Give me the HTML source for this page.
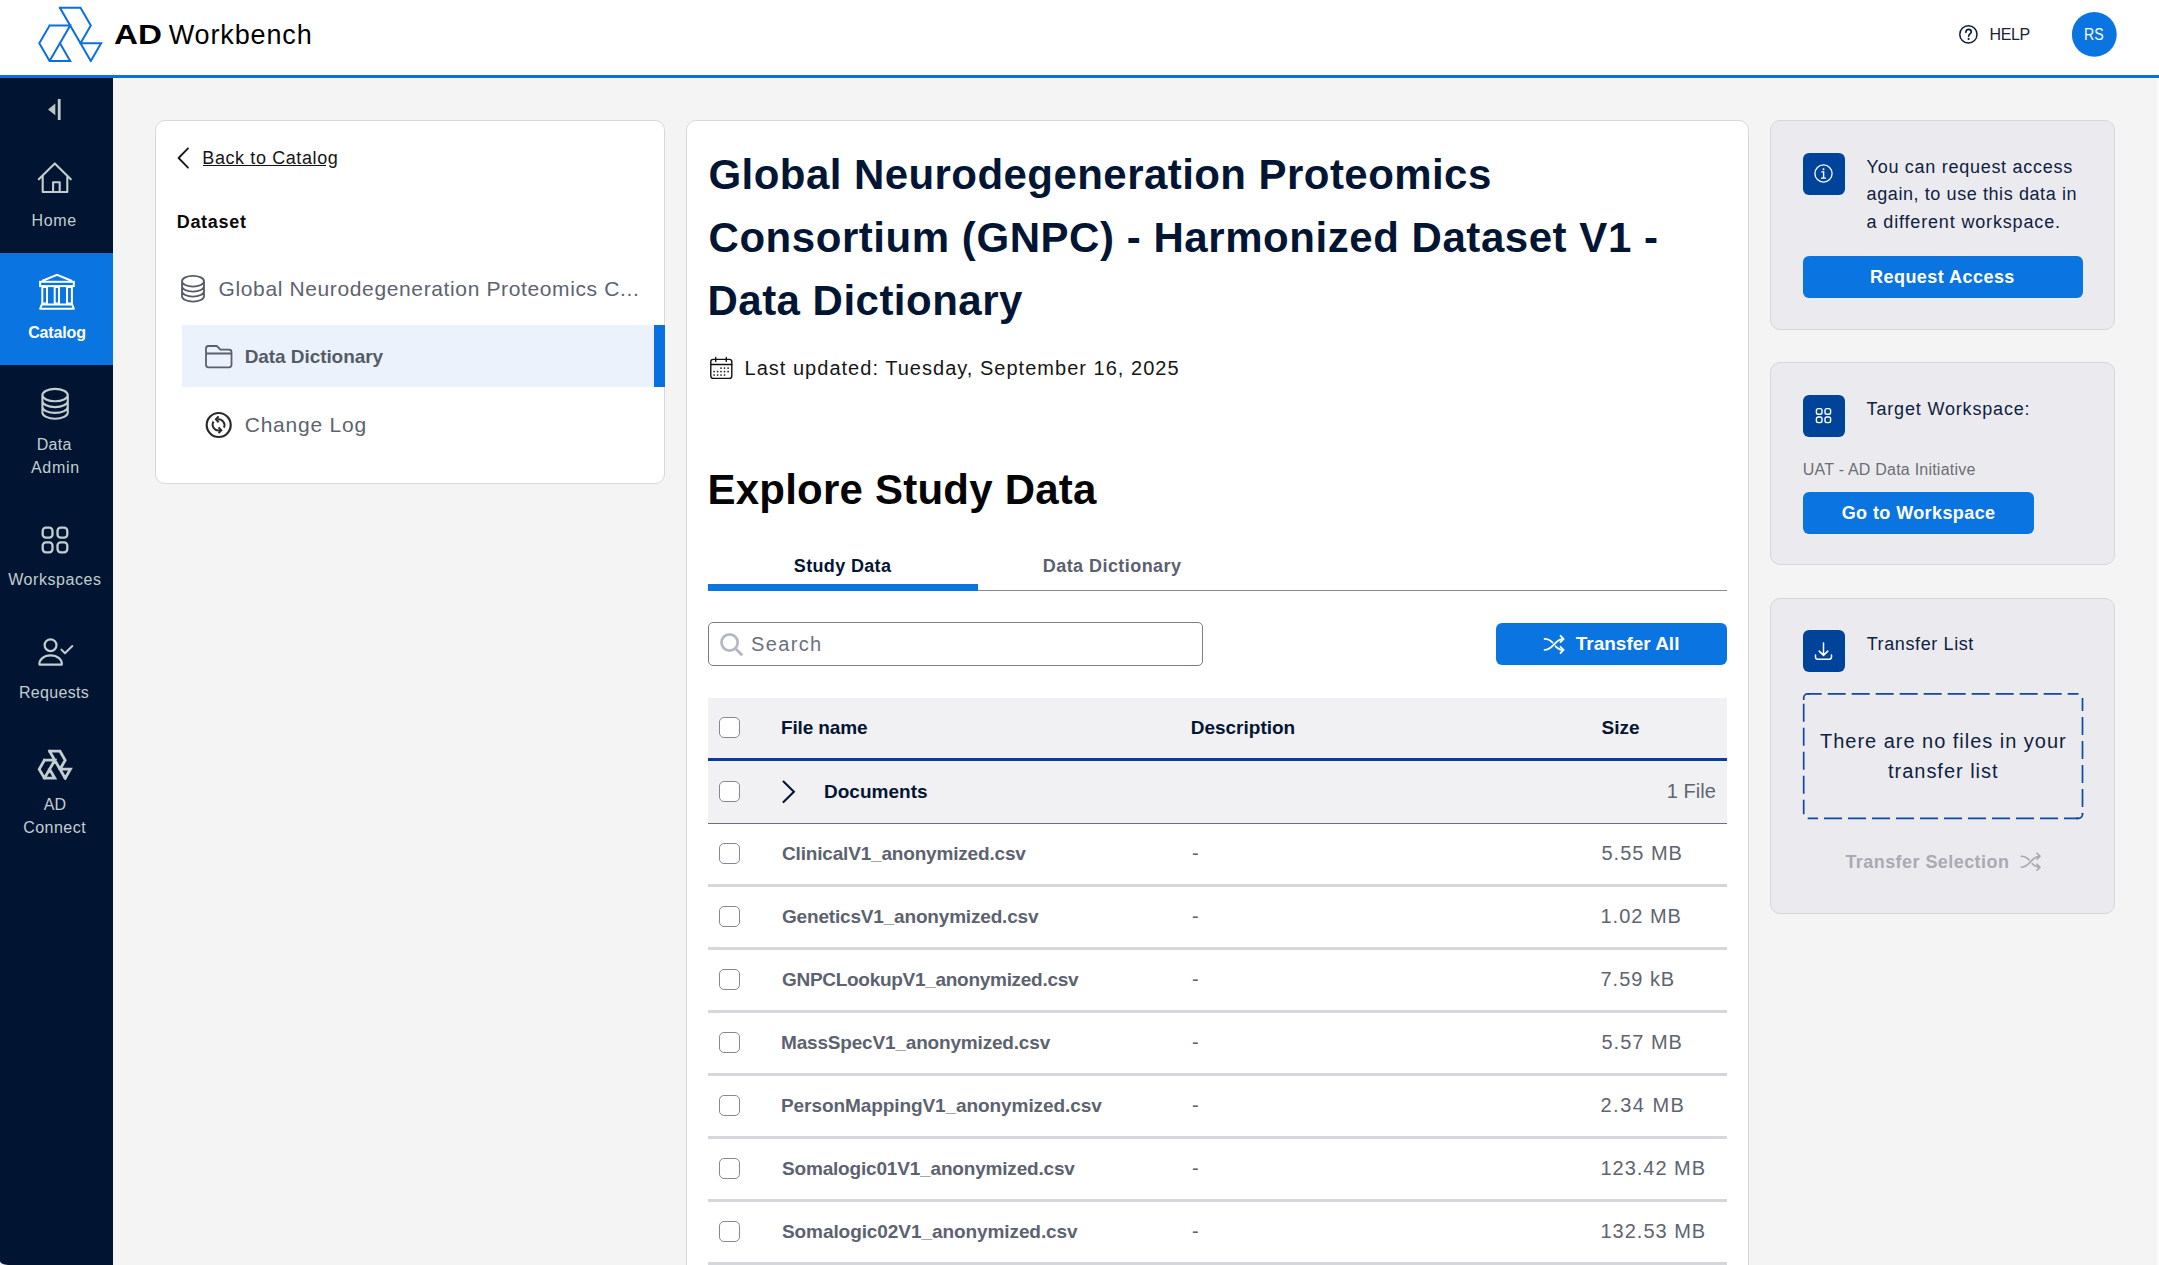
<!DOCTYPE html>
<html><head><meta charset="utf-8">
<style>
*{box-sizing:border-box;margin:0;padding:0}
html,body{width:2159px;height:1265px;overflow:hidden;background:#f4f4f4;font-family:"Liberation Sans",sans-serif}
.a{position:absolute}
.t{position:absolute;white-space:nowrap;line-height:1}
svg{position:absolute;left:0;top:0}
</style></head><body>
<div class="a" style="left:0;top:0;width:2159px;height:75px;background:#fff"></div>
<div class="a" style="left:0;top:75px;width:2159px;height:3px;background:#0a6fe0"></div>
<div class="a" style="left:0;top:78px;width:113px;height:1187px;background:#011533"></div>
<div class="a" style="left:2157px;top:78px;width:2px;height:1187px;background:#fbfbfb"></div>
<div class="a" style="left:155px;top:120px;width:510px;height:364px;background:#fff;border:1px solid #d8d8d8;border-radius:10px"></div>
<div class="a" style="left:182px;top:325px;width:473px;height:62px;background:#ebf2fc"></div>
<div class="a" style="left:203.3px;top:165px;width:122.5px;height:1px;background:#151515"></div>
<div class="a" style="left:654px;top:325px;width:11px;height:62px;background:#0a6fe0"></div>
<div class="a" style="left:686px;top:120px;width:1063px;height:1200px;background:#fff;border:1px solid #d8d8d8;border-radius:10px"></div>
<div class="a" style="left:1770px;top:120px;width:345px;height:210px;background:#ebebef;border:1px solid #d6d6db;border-radius:10px"></div>
<div class="a" style="left:1770px;top:362px;width:345px;height:203px;background:#ebebef;border:1px solid #d6d6db;border-radius:10px"></div>
<div class="a" style="left:1770px;top:598px;width:345px;height:316px;background:#ebebef;border:1px solid #d6d6db;border-radius:10px"></div>
<div class="a" style="left:1803px;top:153px;width:42px;height:42px;background:#00439a;border-radius:6px"></div>
<div class="a" style="left:1803px;top:395px;width:42px;height:42px;background:#00439a;border-radius:6px"></div>
<div class="a" style="left:1803px;top:630px;width:42px;height:42px;background:#00439a;border-radius:6px"></div>
<div class="a" style="left:1803px;top:256px;width:280px;height:42px;background:#0a74e0;border-radius:6px"></div>
<div class="a" style="left:1803px;top:492px;width:231px;height:42px;background:#0a74e0;border-radius:6px"></div>
<div class="a" style="left:708px;top:590px;width:1019px;height:1px;background:#8a8a96"></div>
<div class="a" style="left:708px;top:584px;width:270px;height:7px;background:#0a74e0"></div>
<div class="a" style="left:708px;top:622px;width:495px;height:44px;border:1.5px solid #7a7d88;border-radius:5px;background:#fff"></div>
<div class="a" style="left:1496px;top:623px;width:231px;height:42px;background:#0a74e0;border-radius:6px"></div>
<div class="a" style="left:708px;top:698px;width:1019px;height:60px;background:#f1f1f4"></div>
<div class="a" style="left:708px;top:758px;width:1019px;height:3px;background:#0b3d98"></div>
<div class="a" style="left:708px;top:761px;width:1019px;height:62px;background:#f1f1f4"></div>
<div class="a" style="left:708px;top:823px;width:1019px;height:1px;background:#6b6f80"></div>
<div class="a" style="left:708px;top:884px;width:1019px;height:3px;background:#d6d6dd"></div>
<div class="a" style="left:708px;top:947px;width:1019px;height:3px;background:#d6d6dd"></div>
<div class="a" style="left:708px;top:1010px;width:1019px;height:3px;background:#d6d6dd"></div>
<div class="a" style="left:708px;top:1073px;width:1019px;height:3px;background:#d6d6dd"></div>
<div class="a" style="left:708px;top:1136px;width:1019px;height:3px;background:#d6d6dd"></div>
<div class="a" style="left:708px;top:1199px;width:1019px;height:3px;background:#d6d6dd"></div>
<div class="a" style="left:708px;top:1262px;width:1019px;height:3px;background:#d6d6dd"></div>
<div class="a" style="left:719px;top:717px;width:21px;height:21px;background:#fff;border:1px solid #858896;border-radius:5px"></div>
<div class="a" style="left:719px;top:781px;width:21px;height:21px;background:#fff;border:1px solid #858896;border-radius:5px"></div>
<div class="a" style="left:719px;top:843px;width:21px;height:21px;background:#fff;border:1px solid #858896;border-radius:5px"></div>
<div class="a" style="left:719px;top:906px;width:21px;height:21px;background:#fff;border:1px solid #858896;border-radius:5px"></div>
<div class="a" style="left:719px;top:969px;width:21px;height:21px;background:#fff;border:1px solid #858896;border-radius:5px"></div>
<div class="a" style="left:719px;top:1032px;width:21px;height:21px;background:#fff;border:1px solid #858896;border-radius:5px"></div>
<div class="a" style="left:719px;top:1095px;width:21px;height:21px;background:#fff;border:1px solid #858896;border-radius:5px"></div>
<div class="a" style="left:719px;top:1158px;width:21px;height:21px;background:#fff;border:1px solid #858896;border-radius:5px"></div>
<div class="a" style="left:719px;top:1221px;width:21px;height:21px;background:#fff;border:1px solid #858896;border-radius:5px"></div>
<svg width="2159" height="1265" viewBox="0 0 2159 1265">
<path d="M59.90 7.80 L90.80 60.90 M59.90 7.80 L80.50 7.80 L90.80 25.50 L80.50 43.20 M80.50 43.20 L101.10 43.20 L90.80 60.90 M49.60 25.50 L70.20 25.50 L49.60 60.90 M49.60 25.50 L39.30 43.20 L49.60 60.90 L70.20 60.90 L59.90 43.20" fill="none" stroke="#0a6fe0" stroke-width="2" stroke-linejoin="miter" stroke-linecap="square"/>
<circle cx="1968.4" cy="34.4" r="8.6" fill="none" stroke="#0b1c3a" stroke-width="1.5"/>
<path d="M1965.8 32.3 C1966 30.4 1967.1 29.4 1968.6 29.4 C1970.3 29.4 1971.3 30.5 1971.3 31.9 C1971.3 33.7 1968.6 34.2 1968.6 36.2" fill="none" stroke="#0b1c3a" stroke-width="1.6" stroke-linecap="round"/>
<circle cx="1968.6" cy="38.9" r="1.05" fill="#0b1c3a"/>
<circle cx="2094.3" cy="34.4" r="22.4" fill="#0a74e0"/>
<path d="M55.3 103.6 L48 109.5 L55.3 115.3 Z" fill="#b8c6c6"/><rect x="57.8" y="99" width="2.8" height="21" fill="#c0cccc"/>
<rect x="0" y="253" width="113" height="112" fill="#0a74e0"/>
<path d="M38.8 179.2 L54.8 163.4 L70.8 179.2 M42.7 176 V192 H67.3 V176 M53.1 192 V182.3 H59.7 V192" fill="none" stroke="#c3cecf" stroke-width="2.1" stroke-linecap="round" stroke-linejoin="round"/>
<path d="M42 281 L57 274.8 L72 281" fill="none" stroke="#fff" stroke-width="2"/><rect x="40.1" y="281.8" width="33.7" height="4.3" fill="none" stroke="#fff" stroke-width="2"/><rect x="42.3" y="287" width="4.7" height="16.5" fill="none" stroke="#fff" stroke-width="2"/><rect x="54.7" y="287" width="4.3" height="16.5" fill="none" stroke="#fff" stroke-width="2"/><rect x="67" y="287" width="4.9" height="16.5" fill="none" stroke="#fff" stroke-width="2"/><path d="M41.8 304.5 H72.2 L73.8 308.8 H40.1 Z" fill="none" stroke="#fff" stroke-width="2" stroke-linejoin="round"/>
<path d="M42.400000000000006 395.1 A12.7 6.2 0 0 1 67.8 395.1 A12.7 6.2 0 0 1 42.400000000000006 395.1 M42.400000000000006 400.90000000000003 A12.7 6.2 0 0 0 67.8 400.90000000000003 M42.400000000000006 406.70000000000005 A12.7 6.2 0 0 0 67.8 406.70000000000005 M42.400000000000006 412.5 A12.7 6.2 0 0 0 67.8 412.5 M42.400000000000006 395.1 V412.5 M67.8 395.1 V412.5" fill="none" stroke="#c3cecf" stroke-width="2.1"/>
<rect x="42.7" y="527.7" width="9.8" height="10" rx="3.2" fill="none" stroke="#c3cecf" stroke-width="2.3"/>
<rect x="57.5" y="527.7" width="9.8" height="10" rx="3.2" fill="none" stroke="#c3cecf" stroke-width="2.3"/>
<rect x="42.7" y="542.3" width="9.8" height="10" rx="3.2" fill="none" stroke="#c3cecf" stroke-width="2.3"/>
<rect x="57.5" y="542.3" width="9.8" height="10" rx="3.2" fill="none" stroke="#c3cecf" stroke-width="2.3"/>
<circle cx="50.55" cy="645.2" r="5.9" fill="none" stroke="#c3cecf" stroke-width="2.2"/><path d="M39.5 664.6 C38.8 659.5 44 655.3 50.6 655.3 C57.2 655.3 62.6 659.5 61.7 664.6 Z" fill="none" stroke="#c3cecf" stroke-width="2.2" stroke-linejoin="round"/><path d="M61.4 649.6 L65 653.2 L72.3 646" fill="none" stroke="#c3cecf" stroke-width="2" stroke-linecap="round" stroke-linejoin="round"/>
<path d="M49.60 751.20 L65.20 778.20 M49.60 751.20 L60.00 751.20 L65.20 760.20 L60.00 769.20 M60.00 769.20 L70.40 769.20 L65.20 778.20 M44.40 760.20 L54.80 760.20 L44.40 778.20 M44.40 760.20 L39.20 769.20 L44.40 778.20 L54.80 778.20 L49.60 769.20" fill="none" stroke="#c3cecf" stroke-width="2.8" stroke-linejoin="miter" stroke-linecap="square"/>
<path d="M188 148.3 L178.6 158 L188 167.7" fill="none" stroke="#151515" stroke-width="1.8" stroke-linecap="round" stroke-linejoin="round"/>
<path d="M182 281.2 A11 5.4 0 0 1 204 281.2 A11 5.4 0 0 1 182 281.2 M182 286.2 A11 5.4 0 0 0 204 286.2 M182 291.2 A11 5.4 0 0 0 204 291.2 M182 296.2 A11 5.4 0 0 0 204 296.2 M182 281.2 V296.2 M204 281.2 V296.2" fill="none" stroke="#545a66" stroke-width="1.8"/>
<path d="M206 364.8 V348.5 A2.5 2.5 0 0 1 208.5 346 H216.8 L220.4 349.7 H229 A2.5 2.5 0 0 1 231.5 352.2 V364.8 A2.5 2.5 0 0 1 229 367.3 H208.5 A2.5 2.5 0 0 1 206 364.8 Z M206 353.5 H231.5" fill="none" stroke="#5a606c" stroke-width="1.8" stroke-linejoin="round"/>
<circle cx="218.7" cy="425" r="12" fill="none" stroke="#2a2a2a" stroke-width="2.2"/><path d="M217.5 419.4 A5.8 5.8 0 0 1 223.9 427.6 M220 430.2 A5.8 5.8 0 0 1 213.5 421.6" fill="none" stroke="#2a2a2a" stroke-width="2"/><path d="M218.6 416.3 L215.9 419.3 L218.6 422.2 M218.6 427.4 L221.3 430.2 L218.6 433.1" fill="none" stroke="#2a2a2a" stroke-width="2" stroke-linecap="butt" stroke-linejoin="miter"/>
<rect x="710.8" y="359.4" width="21" height="19" rx="2.4" fill="none" stroke="#111" stroke-width="1.4"/><path d="M710.8 364.5 H731.8 M715.7 357.4 V361.4 M726.3 357.4 V361.4" fill="none" stroke="#111" stroke-width="1.4" stroke-linecap="round"/>
<circle cx="721" cy="368.1" r="0.85" fill="#111"/>
<circle cx="724.5" cy="368.1" r="0.85" fill="#111"/>
<circle cx="728.1" cy="368.1" r="0.85" fill="#111"/>
<circle cx="714.1" cy="371.6" r="0.85" fill="#111"/>
<circle cx="717.6" cy="371.6" r="0.85" fill="#111"/>
<circle cx="721" cy="371.6" r="0.85" fill="#111"/>
<circle cx="724.5" cy="371.6" r="0.85" fill="#111"/>
<circle cx="728.1" cy="371.6" r="0.85" fill="#111"/>
<circle cx="714.1" cy="375" r="0.85" fill="#111"/>
<circle cx="717.6" cy="375" r="0.85" fill="#111"/>
<circle cx="721" cy="375" r="0.85" fill="#111"/>
<circle cx="724.5" cy="375" r="0.85" fill="#111"/>
<circle cx="729.6" cy="642.5" r="8.1" fill="none" stroke="#b5b8c4" stroke-width="2.7"/><path d="M736 649 L742.2 655.3" stroke="#b5b8c4" stroke-width="2.8"/>
<path d="M1544.6 649.9 C1549.35 649.9 1551.4399999999998 647.15 1554.1 644.4 C1556.76 641.65 1558.85 638.9 1563.6 638.9 M1544.6 638.9 C1548.3999999999999 638.9 1550.6799999999998 640.55 1552.58 642.53 M1555.62 646.27 C1557.52 648.25 1559.8 649.9 1563.6 649.9 M1560.5 635.8 L1563.6 638.9 L1560.5 642.0 M1560.5 646.8 L1563.6 649.9 L1560.5 653.0" fill="none" stroke="#fff" stroke-width="1.8" stroke-linecap="round" stroke-linejoin="round"/>
<path d="M783.5 781.5 L793.9 791.8 L783.5 802.1" fill="none" stroke="#021533" stroke-width="2.1" stroke-linecap="round" stroke-linejoin="miter"/>
<circle cx="1823.5" cy="173.5" r="8.6" fill="none" stroke="#fff" stroke-width="1.3"/><circle cx="1823.5" cy="169.3" r="1" fill="#fff"/><path d="M1821.3 171.9 H1823.6 V178 M1821 178.1 H1826" fill="none" stroke="#fff" stroke-width="1.4"/>
<rect x="1816.4" y="408.6" width="5.6" height="5.6" rx="1.8" fill="none" stroke="#fff" stroke-width="1.4"/>
<rect x="1825" y="408.6" width="5.6" height="5.6" rx="1.8" fill="none" stroke="#fff" stroke-width="1.4"/>
<rect x="1816.4" y="417" width="5.6" height="5.6" rx="1.8" fill="none" stroke="#fff" stroke-width="1.4"/>
<rect x="1825" y="417" width="5.6" height="5.6" rx="1.8" fill="none" stroke="#fff" stroke-width="1.4"/>
<path d="M1823.5 643.1 V655.2 M1819.2 651.1 L1823.5 655.4 L1827.8 651.1 M1815.5 655 V657 A2.3 2.3 0 0 0 1817.8 659.3 H1829.2 A2.3 2.3 0 0 0 1831.5 657 V655" fill="none" stroke="#fff" stroke-width="1.5" stroke-linecap="round" stroke-linejoin="round"/>
<path d="M2021.2 867.2 C2025.9 867.2 2027.968 864.45 2030.6000000000001 861.7 C2033.232 858.95 2035.3 856.2 2040.0 856.2 M2021.2 856.2 C2024.96 856.2 2027.2160000000001 857.85 2029.096 859.83 M2032.104 863.57 C2033.9840000000002 865.5500000000001 2036.24 867.2 2040.0 867.2 M2037.0 853.2 L2040.0 856.2 L2037.0 859.2 M2037.0 864.2 L2040.0 867.2 L2037.0 870.2" fill="none" stroke="#a5a7b0" stroke-width="1.6" stroke-linecap="round" stroke-linejoin="round"/>
<path d="M1807.7 693.9 H2078.5" stroke="#0d4aa0" stroke-width="1.7" stroke-dasharray="18 6" stroke-dashoffset="4.0" fill="none"/>
<path d="M2082.5 697.9 V814.3" stroke="#0d4aa0" stroke-width="1.7" stroke-dasharray="18 6" stroke-dashoffset="4.9" fill="none"/>
<path d="M1807.7 818.3 H2078.5" stroke="#0d4aa0" stroke-width="1.7" stroke-dasharray="18 6" stroke-dashoffset="7.7" fill="none"/>
<path d="M1803.7 697.9 V814.3" stroke="#0d4aa0" stroke-width="1.7" stroke-dasharray="18 6" stroke-dashoffset="18.1" fill="none"/>
<path d="M1803.7 700 V697.9 A4 4 0 0 1 1807.7 693.9 H1810" stroke="#0d4aa0" stroke-width="1.7" fill="none"/>
<path d="M2076 818.3 H2078.5 A4 4 0 0 0 2082.5 814.3 V813" stroke="#0d4aa0" stroke-width="1.7" fill="none"/>
<path d="M0 1261 C0.6 1263.6 3.5 1264.6 8 1265 H0 Z" fill="#f2f2f2"/>
</svg>
<div class="t" style="left:113.5px;top:22.0px;font-size:27px;font-weight:700;color:#000;transform:scaleX(1.2286);transform-origin:0 0;">AD</div>
<div class="t" style="left:168.7px;top:22.0px;font-size:27px;font-weight:400;color:#000;letter-spacing:0.87px;">Workbench</div>
<div class="t" style="left:1989.6px;top:27.0px;font-size:16px;font-weight:400;color:#1b2334;letter-spacing:-0.38px;">HELP</div>
<div class="t" style="left:2084.3px;top:27.0px;font-size:16px;font-weight:400;color:#fff;transform:scaleX(0.8854);transform-origin:0 0;">RS</div>
<div class="t" style="left:31.6px;top:213.0px;font-size:16px;font-weight:400;color:#c3cecf;letter-spacing:0.61px;">Home</div>
<div class="t" style="left:28.2px;top:325.0px;font-size:16px;font-weight:700;color:#fff;letter-spacing:-0.15px;">Catalog</div>
<div class="t" style="left:36.8px;top:437.0px;font-size:16px;font-weight:400;color:#c3cecf;letter-spacing:0.27px;">Data</div>
<div class="t" style="left:30.9px;top:460.0px;font-size:16px;font-weight:400;color:#c3cecf;letter-spacing:0.71px;">Admin</div>
<div class="t" style="left:8.2px;top:572.0px;font-size:16px;font-weight:400;color:#c3cecf;letter-spacing:0.56px;">Workspaces</div>
<div class="t" style="left:18.9px;top:685.0px;font-size:16px;font-weight:400;color:#c3cecf;letter-spacing:0.34px;">Requests</div>
<div class="t" style="left:43.8px;top:797.0px;font-size:16px;font-weight:400;color:#c3cecf;">AD</div>
<div class="t" style="left:23.2px;top:820.0px;font-size:16px;font-weight:400;color:#c3cecf;letter-spacing:0.48px;">Connect</div>
<div class="t" style="left:202.3px;top:149.0px;font-size:18px;font-weight:400;color:#151515;letter-spacing:0.60px;">Back to Catalog</div>
<div class="t" style="left:176.7px;top:213.0px;font-size:18px;font-weight:700;color:#0a0a0a;letter-spacing:0.71px;">Dataset</div>
<div class="t" style="left:218.5px;top:278.0px;font-size:21px;font-weight:400;color:#5d6370;letter-spacing:0.63px;">Global Neurodegeneration Proteomics C...</div>
<div class="t" style="left:244.7px;top:347.0px;font-size:19px;font-weight:700;color:#555b66;letter-spacing:-0.07px;">Data Dictionary</div>
<div class="t" style="left:244.7px;top:414.0px;font-size:21px;font-weight:400;color:#5d6370;letter-spacing:0.79px;">Change Log</div>
<div class="t" style="left:708.5px;top:154.0px;font-size:42px;font-weight:700;color:#021533;letter-spacing:0.44px;">Global Neurodegeneration Proteomics</div>
<div class="t" style="left:708.5px;top:217.0px;font-size:42px;font-weight:700;color:#021533;letter-spacing:0.55px;">Consortium (GNPC) - Harmonized Dataset V1 -</div>
<div class="t" style="left:707.5px;top:280.0px;font-size:42px;font-weight:700;color:#021533;letter-spacing:0.48px;">Data Dictionary</div>
<div class="t" style="left:744.5px;top:358.0px;font-size:20px;font-weight:400;color:#161616;letter-spacing:1.02px;">Last updated: Tuesday, September 16, 2025</div>
<div class="t" style="left:707.5px;top:469.0px;font-size:42px;font-weight:700;color:#050505;letter-spacing:0.22px;">Explore Study Data</div>
<div class="t" style="left:793.8px;top:557.0px;font-size:18px;font-weight:700;color:#021533;letter-spacing:0.35px;">Study Data</div>
<div class="t" style="left:1042.8px;top:557.0px;font-size:18px;font-weight:700;color:#5a6070;letter-spacing:0.44px;">Data Dictionary</div>
<div class="t" style="left:751.0px;top:634.0px;font-size:20px;font-weight:400;color:#6b7080;letter-spacing:1.35px;">Search</div>
<div class="t" style="left:1575.8px;top:634.0px;font-size:19px;font-weight:700;color:#fff;letter-spacing:-0.02px;">Transfer All</div>
<div class="t" style="left:781.0px;top:718.0px;font-size:19px;font-weight:700;color:#021533;letter-spacing:-0.13px;">File name</div>
<div class="t" style="left:1190.7px;top:718.0px;font-size:19px;font-weight:700;color:#021533;">Description</div>
<div class="t" style="left:1601.5px;top:718.0px;font-size:19px;font-weight:700;color:#021533;letter-spacing:0.02px;">Size</div>
<div class="t" style="left:824.0px;top:782.0px;font-size:19px;font-weight:700;color:#021533;letter-spacing:0.01px;">Documents</div>
<div class="t" style="left:1666.7px;top:781.0px;font-size:20px;font-weight:400;color:#60646f;letter-spacing:0.04px;">1 File</div>
<div class="t" style="left:782.0px;top:844.0px;font-size:19px;font-weight:700;color:#5d6270;letter-spacing:-0.18px;">ClinicalV1_anonymized.csv</div>
<div class="t" style="left:1192.0px;top:843.0px;font-size:20px;font-weight:400;color:#60646f;">-</div>
<div class="t" style="left:1601.5px;top:843.0px;font-size:20px;font-weight:400;color:#60646f;letter-spacing:0.98px;">5.55 MB</div>
<div class="t" style="left:782.0px;top:907.0px;font-size:19px;font-weight:700;color:#5d6270;letter-spacing:-0.18px;">GeneticsV1_anonymized.csv</div>
<div class="t" style="left:1192.0px;top:906.0px;font-size:20px;font-weight:400;color:#60646f;">-</div>
<div class="t" style="left:1600.5px;top:906.0px;font-size:20px;font-weight:400;color:#60646f;letter-spacing:0.98px;">1.02 MB</div>
<div class="t" style="left:782.0px;top:970.0px;font-size:19px;font-weight:700;color:#5d6270;letter-spacing:-0.29px;">GNPCLookupV1_anonymized.csv</div>
<div class="t" style="left:1192.0px;top:969.0px;font-size:20px;font-weight:400;color:#60646f;">-</div>
<div class="t" style="left:1600.5px;top:969.0px;font-size:20px;font-weight:400;color:#60646f;letter-spacing:0.98px;">7.59 kB</div>
<div class="t" style="left:781.0px;top:1033.0px;font-size:19px;font-weight:700;color:#5d6270;letter-spacing:-0.18px;">MassSpecV1_anonymized.csv</div>
<div class="t" style="left:1192.0px;top:1032.0px;font-size:20px;font-weight:400;color:#60646f;">-</div>
<div class="t" style="left:1601.5px;top:1032.0px;font-size:20px;font-weight:400;color:#60646f;letter-spacing:0.98px;">5.57 MB</div>
<div class="t" style="left:781.0px;top:1096.0px;font-size:19px;font-weight:700;color:#5d6270;letter-spacing:-0.08px;">PersonMappingV1_anonymized.csv</div>
<div class="t" style="left:1192.0px;top:1095.0px;font-size:20px;font-weight:400;color:#60646f;">-</div>
<div class="t" style="left:1600.5px;top:1095.0px;font-size:20px;font-weight:400;color:#60646f;letter-spacing:1.49px;">2.34 MB</div>
<div class="t" style="left:782.0px;top:1159.0px;font-size:19px;font-weight:700;color:#5d6270;letter-spacing:-0.18px;">Somalogic01V1_anonymized.csv</div>
<div class="t" style="left:1192.0px;top:1158.0px;font-size:20px;font-weight:400;color:#60646f;">-</div>
<div class="t" style="left:1600.5px;top:1158.0px;font-size:20px;font-weight:400;color:#60646f;letter-spacing:0.98px;">123.42 MB</div>
<div class="t" style="left:782.0px;top:1222.0px;font-size:19px;font-weight:700;color:#5d6270;letter-spacing:-0.08px;">Somalogic02V1_anonymized.csv</div>
<div class="t" style="left:1192.0px;top:1221.0px;font-size:20px;font-weight:400;color:#60646f;">-</div>
<div class="t" style="left:1600.5px;top:1221.0px;font-size:20px;font-weight:400;color:#60646f;letter-spacing:0.99px;">132.53 MB</div>
<div class="t" style="left:1866.6px;top:158.0px;font-size:18px;font-weight:400;color:#0f2140;letter-spacing:0.72px;">You can request access</div>
<div class="t" style="left:1866.6px;top:185.0px;font-size:18px;font-weight:400;color:#0f2140;letter-spacing:0.59px;">again, to use this data in</div>
<div class="t" style="left:1866.6px;top:213.0px;font-size:18px;font-weight:400;color:#0f2140;letter-spacing:0.84px;">a different workspace.</div>
<div class="t" style="left:1870.0px;top:268.0px;font-size:18px;font-weight:700;color:#fff;letter-spacing:0.46px;">Request Access</div>
<div class="t" style="left:1866.6px;top:400.0px;font-size:18px;font-weight:400;color:#0f2140;letter-spacing:0.83px;">Target Workspace:</div>
<div class="t" style="left:1802.8px;top:462.0px;font-size:16px;font-weight:400;color:#6b6e75;letter-spacing:0.22px;">UAT - AD Data Initiative</div>
<div class="t" style="left:1841.7px;top:504.0px;font-size:18px;font-weight:700;color:#fff;letter-spacing:0.41px;">Go to Workspace</div>
<div class="t" style="left:1866.7px;top:635.0px;font-size:18px;font-weight:400;color:#0f2140;letter-spacing:0.61px;">Transfer List</div>
<div class="t" style="left:1820.0px;top:731.0px;font-size:20px;font-weight:400;color:#0f2140;letter-spacing:0.98px;">There are no files in your</div>
<div class="t" style="left:1888.0px;top:761.0px;font-size:20px;font-weight:400;color:#0f2140;letter-spacing:0.98px;">transfer list</div>
<div class="t" style="left:1845.4px;top:853.0px;font-size:18px;font-weight:700;color:#a9aab3;letter-spacing:0.44px;">Transfer Selection</div>
</body></html>
